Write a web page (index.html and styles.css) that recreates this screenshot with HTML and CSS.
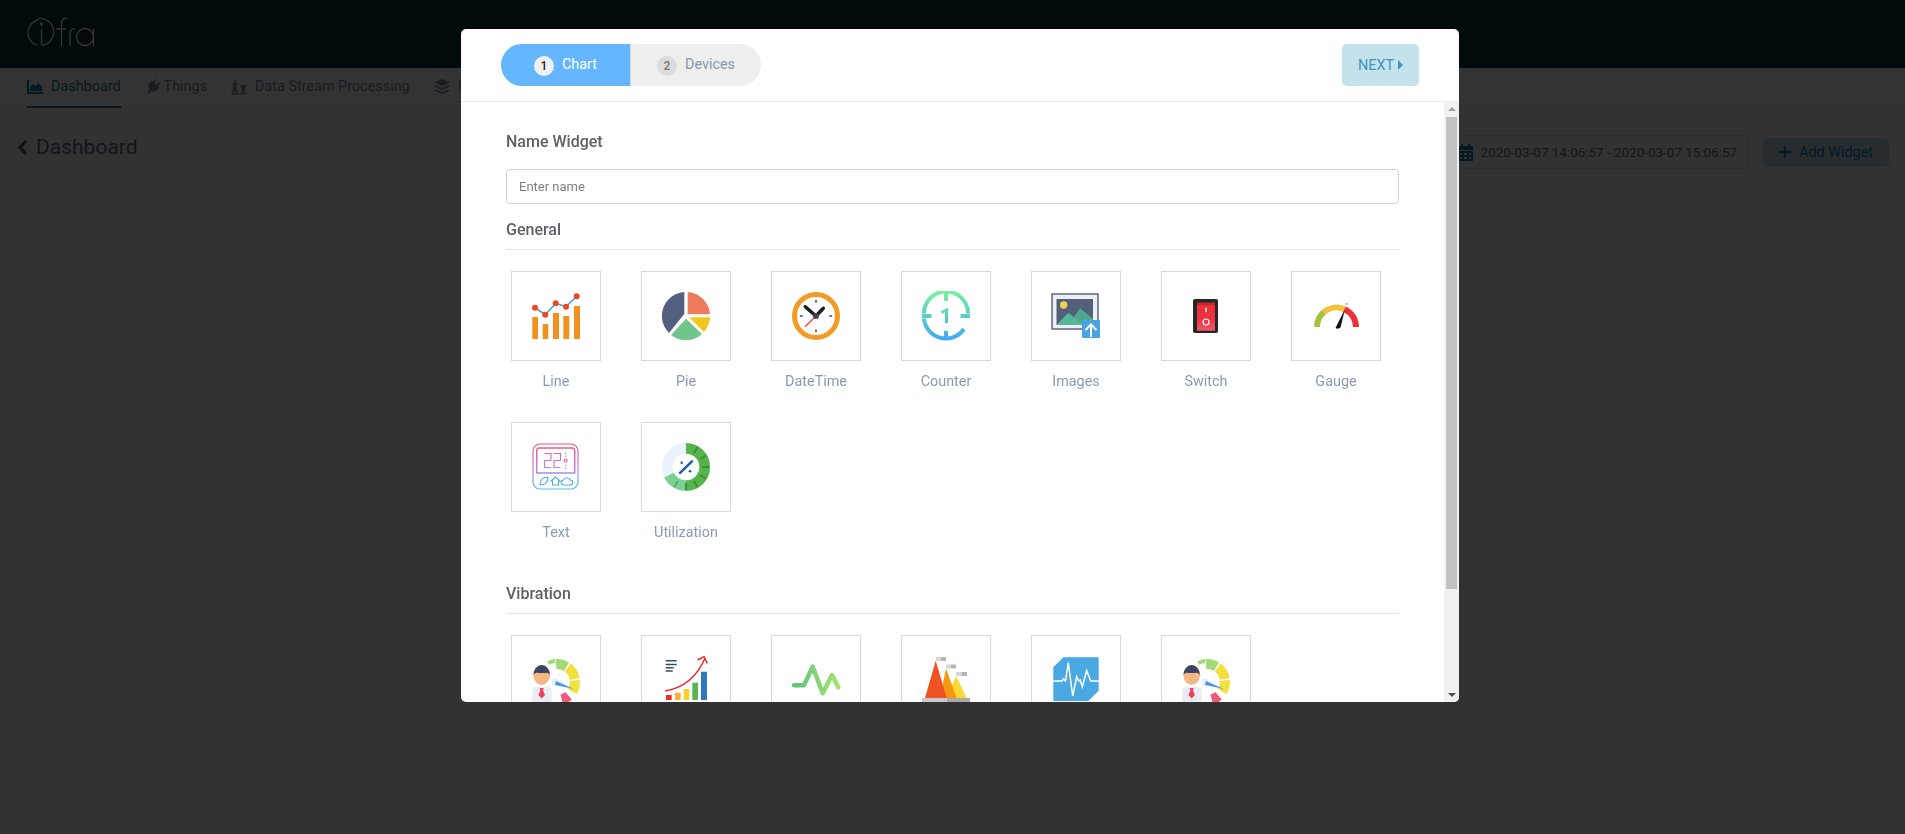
FILE: index.html
```html
<!DOCTYPE html>
<html lang="en">
<head>
    <meta charset="UTF-8">
    <meta name="viewport" content="width=device-width, initial-scale=1.0">
    <title>Dashboard</title>
    <link rel="stylesheet" href="styles.css">
</head>
<body>
    <header class="topbar">
        <svg class="logo" width="70" height="34" viewBox="0 0 70 34" fill="none" stroke="#fff" stroke-width="1.3">
            <path d="M12 4.500a13.500 13.500 0 0 0-2 26"/>
            <path d="M11 3.500a13.500 13.500 0 1 1 4 27"/>
            <path d="M14.500 14v16"/>
            <circle cx="14.500" cy="9" r="1.100"/>
            <path d="M34.500 31V8a4.500 4.500 0 0 1 6-4.500M29 14h10M43 31V18a4 4 0 0 1 5-4"/>
            <circle cx="58" cy="22" r="8.500"/>
            <path d="M66.500 14v17"/>
        </svg>
    </header>

    <nav class="tabs">
        <a class="tab active">
            <svg width="16" height="14" viewBox="0 0 16 14"><path d="M0 0h2v12h14v2H0zM3 11V8l3-4 3 2 2-3 4 4v4z"/></svg>
            Dashboard
        </a>
        <a class="tab plug">
            <svg width="16" height="16" viewBox="0 0 15 15"><path transform="rotate(40 7.500 7.500)" d="M4.500 0H6v4H4.500zM9 0h1.500v4H9zM2.500 4h10v2c0 3-2 5-4 5.500V15h-2v-3.500c-2-.5-4-2.500-4-5.500z"/></svg>
            Things
        </a>
        <a class="tab">
            <svg width="16" height="16" viewBox="0 0 17 16"><path d="M4 0h1v1h1v1H5v2h2v1H5.500l.5 6h1v2H1v-2h1l.5-6H1V4h2.500V2h-1V1H4zM0 14h8v2H0zM10 6h6v2.500h-1L14.500 12h.5v1h-4v-1h.5L11 8.500h-1zM9.500 14h7v2h-7z"/></svg>
            Data Stream Processing
        </a>
        <a class="tab">
            <svg width="16" height="16" viewBox="0 0 16 16"><path d="M8 0l8 3.500L8 7 0 3.500zM2 6.500L8 9l6-2.500 2 1L8 11 0 7.500zM2 10.500L8 13l6-2.500 2 1L8 15 0 11.500z"/></svg>
            Rules
        </a>
    </nav>

    <main class="page-head">
        <h1 class="page-title">
            <svg width="11" height="17" viewBox="0 0 11 17" fill="none" stroke-width="3"><path d="M9 2L3 8.500l6 6.500"/></svg>
            Dashboard
        </h1>
        <div class="page-actions">
            <div class="range">
                <svg width="15" height="17" viewBox="0 0 15 17"><path d="M3 0h2v2h5V0h2v2h3v4H0V2h3zM0 7h15v10H0zM2 9v2h2V9zm4 0v2h3V9zm5 0v2h2V9zM2 13v2h2v-2zm4 0v2h3v-2zm5 0v2h2v-2z"/></svg>
                2020-03-07 14:06:57 - 2020-03-07 15:06:57
            </div>
            <button class="add-btn">
                <svg width="12" height="12" viewBox="0 0 12 12"><path d="M4.800 0h2.400v4.800H12v2.400H7.200V12H4.800V7.200H0V4.800h4.800z"/></svg>
                Add Widget
            </button>
        </div>
    </main>

    <div class="overlay"></div>

    <section class="modal">
        <div class="modal-head">
            <div class="steps">
                <div class="step current"><span class="num">1</span>Chart</div>
                <div class="step"><span class="num">2</span>Devices</div>
            </div>
            <button class="next-btn">NEXT<svg width="5" height="10" viewBox="0 0 5 10"><path d="M0 0l5 5-5 5z"/></svg></button>
        </div>
        <div class="modal-body">
            <div class="modal-content">
                <h3 class="name-title">Name Widget</h3>
                <input class="name-input" placeholder="Enter name">

                <h3 class="group-title">General</h3>
                <div class="grid">
                    <div class="item">
                        <div class="box">
                            <svg width="50" height="50" viewBox="0 0 50 50">
                                <path fill="#f4901e" d="M1.300 26H7v22H1.300zM11.700 33h5.600v15h-5.600zM22 22h6v26h-6zM32.300 25h6v23h-6zM43 15h6v33h-6z"/>
                                <path fill="none" stroke="#3ba0c9" stroke-width="1.500" d="M4 16.700l10.300 7 10.400-11.400L35 15.700l10.700-10.400"/>
                                <g fill="#ee4723"><circle cx="4" cy="16.700" r="3"/><circle cx="14.300" cy="23.700" r="3"/><circle cx="24.700" cy="12.300" r="3"/><circle cx="35" cy="15.700" r="3"/><circle cx="45.700" cy="5.300" r="3"/></g>
                            </svg>
                        </div>
                        <span>Line</span>
                    </div>
                    <div class="item">
                        <div class="box">
                            <svg width="50" height="50" viewBox="0 0 50 50">
                                <path fill="#54607f" d="M23.300 1v22L8 42A24 24 0 0 1 23.300 1z"/>
                                <path fill="#ef7b5d" d="M26.700 1A24 24 0 0 1 49 23.300H26.700z"/>
                                <path fill="#f2c71c" d="M28 26.300h21A24 24 0 0 1 43 41z"/>
                                <path fill="#70c58a" d="M25 27.700L41 43a24 24 0 0 1-31 1z"/>
                            </svg>
                        </div>
                        <span>Pie</span>
                    </div>
                    <div class="item">
                        <div class="box">
                            <svg width="50" height="50" viewBox="0 0 50 50">
                                <circle cx="25" cy="25" r="21.500" fill="#fff" stroke="#f29c26" stroke-width="5"/>
                                <path stroke="#707070" stroke-width="2" d="M25 9v2.500M25 38.500V41M9 25h2.500M38.500 25H41"/>
                                <path stroke="#ef3c4c" stroke-width="1.300" d="M25 25L14 35.700"/>
                                <path fill="none" stroke="#1c1c1c" stroke-width="3.500" stroke-linecap="round" d="M14.300 15.700L25 25l7.300-7.700"/>
                                <circle cx="25" cy="25" r="3" fill="#444"/>
                            </svg>
                        </div>
                        <span>DateTime</span>
                    </div>
                    <div class="item">
                        <div class="box">
                            <svg width="50" height="50" viewBox="0 0 50 50">
                                <defs>
                                    <linearGradient id="gc" gradientUnits="userSpaceOnUse" x1="0" y1="1" x2="0" y2="49"><stop offset="0" stop-color="#78f09c"/><stop offset="1" stop-color="#3fa9f5"/></linearGradient>
                                </defs>
                                <g fill="none" stroke="url(#gc)" stroke-width="4">
                                    <path d="M3 22.500A22 22 0 0 1 47 22.500"/>
                                    <path d="M3 27.500A22 22 0 0 0 43 38"/>
                                    <path d="M25 1v9M25 40v9M1 25h9.500M39.500 25H49"/>
                                    <path stroke-width="3" d="M20.500 21.500l5-2.500v13"/>
                                </g>
                            </svg>
                        </div>
                        <span>Counter</span>
                    </div>
                    <div class="item">
                        <div class="box">
                            <svg width="50" height="50" viewBox="0 0 50 50">
                                <rect x="1" y="3" width="46" height="35" fill="#edeff2" stroke="#5a6680" stroke-width="1.500"/>
                                <rect x="5.500" y="8" width="36.500" height="26" fill="#54607a"/>
                                <circle cx="12.700" cy="14" r="3.700" fill="#f2cf55"/>
                                <path fill="#4ea890" d="M22 27l7.300-9.700L42 28v6H30z"/>
                                <path fill="#54b899" d="M5.500 34L17.300 21.700 32 34z"/>
                                <rect x="31" y="29" width="18" height="18" fill="#4aa3df"/>
                                <path fill="none" stroke="#fff" stroke-width="2" d="M40 46V34M34.500 39l5.500-5.500 5.500 5.500"/>
                            </svg>
                        </div>
                        <span>Images</span>
                    </div>
                    <div class="item">
                        <div class="box">
                            <svg width="50" height="50" viewBox="0 0 50 50">
                                <defs>
                                    <linearGradient id="gs" x1="0" y1="0" x2="0" y2="1"><stop offset="0" stop-color="#ec2f3a"/><stop offset=".6" stop-color="#ec3340"/><stop offset="1" stop-color="#f0596a"/></linearGradient>
                                </defs>
                                <rect x="12" y="8" width="25" height="34" rx="2" fill="#262626"/>
                                <rect x="16" y="11.700" width="18" height="28" fill="url(#gs)"/>
                                <rect x="16" y="11.700" width="18" height="2.500" fill="#c9252f"/>
                                <path stroke="#fff" stroke-width="1.300" d="M25 16.700v4.500"/>
                                <circle cx="25" cy="31" r="3" fill="none" stroke="#fff" stroke-width="1.200"/>
                            </svg>
                        </div>
                        <span>Switch</span>
                    </div>
                    <div class="item">
                        <div class="box">
                            <svg width="50" height="50" viewBox="0 0 50 50">
                                <path fill="none" stroke="#a4c23c" stroke-width="6" d="M6 36A19.500 19.500 0 0 1 13 21"/>
                                <path fill="none" stroke="#f2c13d" stroke-width="6" d="M13 21A19.500 19.500 0 0 1 33.500 18.200"/>
                                <path fill="none" stroke="#ec3237" stroke-width="6" d="M33.500 18.200A19.500 19.500 0 0 1 45 36"/>
                                <path fill="#111" d="M34 18L29.500 36.500q-2.500 2-5 .5z"/>
                                <path stroke="#999" stroke-width="1" d="M34 13h3"/>
                            </svg>
                        </div>
                        <span>Gauge</span>
                    </div>
                    <div class="item">
                        <div class="box">
                            <svg width="50" height="50" viewBox="0 0 50 50">
                                <defs>
                                    <linearGradient id="gt" gradientUnits="userSpaceOnUse" x1="0" y1="2" x2="0" y2="47"><stop offset="0" stop-color="#f0547a"/><stop offset=".5" stop-color="#c47ae0"/><stop offset="1" stop-color="#4fc0f5"/></linearGradient>
                                </defs>
                                <g fill="none" stroke="url(#gt)" stroke-width="1.200">
                                    <rect x="2" y="2" width="45" height="45" rx="7"/>
                                    <path d="M5.700 8.500a2.500 2.500 0 0 1 2.500-2.500h33a2.500 2.500 0 0 1 2.500 2.500V31H5.700z" stroke-width="1.500"/>
                                    <path stroke-width="1.100" d="M13.500 11.500h6.500v7h-6.500v7H20M23 11.500h6.500v7H23v7h6.500"/>
                                    <circle cx="34.700" cy="18.700" r="1.500"/>
                                    <path stroke-width="1" d="M34.700 10.500v1.500M34.700 13.500V15M34.700 22.500V24M34.700 25.500V27"/>
                                </g>
                                <g fill="none" stroke="#52a9ea" stroke-width="1.100">
                                    <path d="M9 43c0-5 3-8 8-8 0 5-3 8-8 8z"/>
                                    <path d="M20 39l4.500-4 4.500 4h-1.500v4h-6v-4z"/>
                                    <path d="M33 43a2.500 2.500 0 0 1-.5-5 3.500 3.500 0 0 1 6.500 0 2.500 2.500 0 0 1 .5 5z"/>
                                </g>
                            </svg>
                        </div>
                        <span>Text</span>
                    </div>
                    <div class="item">
                        <div class="box">
                            <svg width="50" height="50" viewBox="0 0 50 50">
                                <circle cx="25" cy="25" r="18.700" fill="none" stroke="#eaf3fb" stroke-width="10.700"/>
                                <path fill="none" stroke="#55b44c" stroke-width="10.700" d="M25 6.300a18.700 18.700 0 0 1 0 37.400"/>
                                <path fill="none" stroke="#7bd093" stroke-width="10.700" d="M25 43.700A18.700 18.700 0 0 1 8.100 33.100"/>
                                <path stroke="#3f8f3c" stroke-width="2" d="M33 11.100l3.500-6M38.900 17l6-3.500M41 25h7M38.900 33l6 3.500M33 38.900l3.500 6M25 41v7"/>
                                <path stroke="#58ad68" stroke-width="2" d="M17 38.900l-3.500 6"/>
                                <path stroke="#1f5da5" stroke-width="2.500" d="M18.300 31.700L31.700 18.700"/>
                                <circle cx="20.700" cy="20.700" r="1.300" fill="#1f5da5"/>
                                <circle cx="29" cy="29.300" r="1.300" fill="#1f5da5"/>
                            </svg>
                        </div>
                        <span>Utilization</span>
                    </div>
                </div>

                <h3 class="group-title vibration">Vibration</h3>
                <div class="grid">
                    <div class="item">
                        <div class="box">
                            <svg width="50" height="50" viewBox="0 0 50 50">
                                <g id="man">
                                    <g fill="none">
                                        <path stroke="#a3d977" stroke-width="4" d="M17.100 8A21 21 0 0 1 24.200 6.100"/>
                                        <path stroke="#a3d977" stroke-width="10" d="M25.100 9A18 18 0 0 1 35.500 11.700"/>
                                        <path stroke="#f4e03a" stroke-width="10" d="M36.800 12.600A18 18 0 0 1 43.700 23.900"/>
                                        <path stroke="#f4e03a" stroke-width="10" d="M43.900 25.400A18 18 0 0 1 41.300 36.500"/>
                                        <path stroke="#ef5a78" stroke-width="10" d="M37.600 40.800A18 18 0 0 1 30.700 44.400"/>
                                    </g>
                                    <circle cx="24" cy="27" r="3.500" fill="#e8eef7"/>
                                    <path fill="#3f9be8" d="M25 26l18 8-19-4z"/>
                                    <ellipse cx="10.700" cy="20" rx="8.300" ry="10" fill="#f4b783"/>
                                    <path fill="#3c4466" d="M2.400 20a8.300 10 0 0 1 16.600 0c-1-1.500-2-2-3-2.300-3 .3-8 .3-10.500 0-1 .3-2.100.8-3.100 2.300z"/>
                                    <path fill="#e9ecf3" d="M1.300 50V36c0-3 2-4.300 5-4.300h9.200c3 0 5.200 1.300 5.200 4.300v14z"/>
                                    <path fill="#e8435f" d="M8.700 33h4l-.6 2.500 1.900 4.500-3.300 3.500L7.400 40l1.900-4.500z"/>
                                </g>
                            </svg>
                        </div>
                    </div>
                    <div class="item">
                        <div class="box">
                            <svg width="50" height="50" viewBox="0 0 50 50">
                                <path stroke="#33505f" stroke-width="1.500" d="M4.700 5.700h11M4.700 9.500h11M4.700 12.700h8M4.700 16h7"/>
                                <path fill="none" stroke="#e8262c" stroke-width="1.500" d="M4 36C22 33 36 22 44 3.300"/>
                                <path fill="none" stroke="#e8262c" stroke-width="1.500" d="M36.700 5l6.300-3.300 3.300 6.600"/>
                                <path fill="#ee2e24" d="M5 40h5.700v5H5z"/>
                                <path fill="#f8b13e" d="M14 37.700h5.700V45H14z"/>
                                <path fill="#fcd028" d="M22.700 34h5.600v11h-5.600z"/>
                                <path fill="#5bb552" d="M31.300 27.700H37V45h-5.700z"/>
                                <path fill="#2d79bf" d="M40 16.700h6V45h-6z"/>
                            </svg>
                        </div>
                    </div>
                    <div class="item">
                        <div class="box">
                            <svg width="50" height="50" viewBox="0 0 50 50">
                                <defs>
                                    <linearGradient id="gw" gradientUnits="userSpaceOnUse" x1="3" y1="0" x2="47" y2="0"><stop offset="0" stop-color="#5fc47e"/><stop offset="1" stop-color="#a4e26d"/></linearGradient>
                                </defs>
                                <path fill="none" stroke="url(#gw)" stroke-width="4.500" stroke-linecap="round" stroke-linejoin="round" d="M3 30.300h10l8.700-18.600 10 26.600L41 20l6.300 12.300"/>
                            </svg>
                        </div>
                    </div>
                    <div class="item">
                        <div class="box">
                            <svg width="50" height="50" viewBox="0 0 50 50">
                                <path fill="#d8d8d8" d="M15 2h5v4h-5zM25 9.500h5v4h-5zM35 17h5.500v4H35z"/>
                                <path fill="#b5b5b5" d="M20 2h5v4h-5zM30 9.500h5v4h-5zM40.500 17h5.500v4h-5.500z"/>
                                <path fill="#fdd835" d="M35 21l10.700 22h-20z"/>
                                <path fill="#f59a10" d="M25 13.300L35.700 43H19z"/>
                                <path fill="#ef5323" d="M14.700 5.700L25.700 43H4z"/>
                                <path fill="#c9c9c9" d="M1 43h24.700v7H1z"/>
                                <path fill="#aaa" d="M25.700 43H49v7H25.700z"/>
                            </svg>
                        </div>
                    </div>
                    <div class="item">
                        <div class="box">
                            <svg width="50" height="50" viewBox="0 0 50 50">
                                <path fill="#4aa8e3" d="M12.300 2.300h35.400v33.400L37.300 46h-35V12.300z"/>
                                <path fill="none" stroke="#fff" stroke-width="1.500" d="M2.300 26H11l1.500-2 2 2 2.800-18.300L21.700 41l4-19.300 2 4.300 1.500-1 2.100 6.700 4.400-16 4 10.300h8"/>
                            </svg>
                        </div>
                    </div>
                    <div class="item">
                        <div class="box">
                            <svg width="50" height="50" viewBox="0 0 50 50"><use href="#man"/></svg>
                        </div>
                    </div>
                </div>
            </div>
            <div class="scrollbar">
                <span class="arrow up"></span>
                <div class="thumb"></div>
                <span class="arrow down"></span>
            </div>
        </div>
    </section>
</body>
</html>
```

FILE: styles.css
```css
* {
    box-sizing: border-box;
}
html, body {
    height: 100%;
}
body {
    margin: 0;
    overflow: hidden;
    font-family: Roboto, sans-serif;
    background-color: #f8f8f8;
    color: #32325d;
}
.topbar {
    height: 68px;
    background-color: #0a3241;
    padding: 15px 0 0 27px;
}
.logo {
    display: block;
}
.tabs {
    display: flex;
    height: 40px;
    gap: 24px;
    padding-left: 27px;
    background-color: #fff;
    border-bottom: 1px solid #ececec;
}
.tab {
    display: flex;
    align-items: center;
    gap: 8px;
    height: 40px;
    padding-bottom: 3px;
    font-size: 14.4px;
    color: #7f8fa3;
    fill: #7f8fa3;
}
.tab.plug svg {
    margin-right: -5px;
}
.tab.active {
    color: #1d7fb0;
    fill: #1d7fb0;
    border-bottom: 2px solid #1d7fb0;
    padding-bottom: 1px;
}
.page-head {
    display: flex;
    justify-content: space-between;
    align-items: center;
    padding: 27px 16px 0 17px;
}
.page-title {
    display: flex;
    align-items: center;
    gap: 8px;
    margin: 0 0 10px 0;
    font-size: 21px;
    font-weight: 400;
    color: #5e6e82;
    stroke: #4a5666;
}
.page-actions {
    display: flex;
    align-items: center;
    gap: 15px;
}
.range {
    display: flex;
    align-items: center;
    gap: 8px;
    height: 34px;
    padding: 0 10px 0 0;
    font-size: 13.44px;
    color: #707070;
    fill: #1d7fb0;
    border: 1px solid #ddd;
    border-radius: 4px;
}
.add-btn {
    display: flex;
    align-items: center;
    justify-content: center;
    gap: 8px;
    height: 29px;
    width: 126px;
    border: 0;
    border-radius: 5px;
    background-color: #c2dfe9;
    color: #1d7fb0;
    fill: #1d7fb0;
    font-family: Roboto, sans-serif;
    font-size: 14.4px;
}
.overlay {
    position: fixed;
    inset: 0;
    background-color: rgba(0, 0, 0, 0.8);
}
.modal {
    position: fixed;
    left: 461px;
    top: 29px;
    width: 998px;
    height: 673px;
    display: flex;
    flex-direction: column;
    overflow: hidden;
    background-color: #fff;
    border-radius: 5px;
}
.modal-head {
    display: flex;
    justify-content: space-between;
    align-items: flex-start;
    height: 73px;
    flex-shrink: 0;
    padding: 15px 40px 0 40px;
    border-bottom: 1px solid #ebebeb;
}
.steps {
    display: flex;
    width: 260px;
    height: 42px;
    border-radius: 21px;
    overflow: hidden;
    background-color: #eeeeee;
}
.step {
    display: flex;
    align-items: center;
    justify-content: center;
    gap: 8px;
    width: 130px;
    padding-bottom: 2px;
    font-size: 14.4px;
    color: #8898aa;
}
.step.current {
    background-color: #63b6ff;
    border-right: 1px solid #d8d8d8;
    color: #fff;
}
.num {
    display: flex;
    align-items: center;
    justify-content: center;
    width: 20px;
    height: 20px;
    margin-top: 4px;
    border-radius: 50%;
    font-size: 12px;
    font-weight: 500;
    background-color: #dcdcdc;
    color: #777;
}
.current .num {
    background-color: #f1f1f1;
    color: #222;
}
.next-btn {
    display: flex;
    align-items: center;
    justify-content: center;
    gap: 4px;
    width: 77px;
    height: 42px;
    border: 0;
    border-radius: 5px;
    background-color: #c4e2ec;
    color: #3f94c0;
    fill: #3f94c0;
    font-family: Roboto, sans-serif;
    font-size: 14.4px;
}
.modal-body {
    display: flex;
    flex: 1;
    min-height: 0;
}
.modal-content {
    flex: 1;
    min-width: 0;
    padding: 31px 45px 0 45px;
    overflow: hidden;
}
.name-title, .group-title {
    margin: 0;
    font-size: 16px;
    font-weight: 500;
    line-height: 18px;
    color: #5f5f66;
}
.name-input {
    display: block;
    width: 100%;
    height: 35px;
    margin-top: 18px;
    padding: 0 12px;
    border: 1px solid #ccd2dc;
    border-radius: 4px;
    font-family: Roboto, sans-serif;
    font-size: 13px;
}
.name-input::placeholder {
    color: #7b7f86;
}
.group-title {
    height: 30px;
    margin-top: 16px;
    padding-top: 1px;
    border-bottom: 1px solid #e3e3e3;
}
.group-title.vibration {
    margin-top: 11px;
}
.grid {
    display: flex;
    flex-wrap: wrap;
    column-gap: 40px;
    margin-top: 21px;
    padding-left: 5px;
}
.item {
    width: 90px;
    height: 151px;
    text-align: center;
    font-size: 14.4px;
    color: #8a9ab5;
}
.box {
    display: flex;
    align-items: center;
    justify-content: center;
    width: 90px;
    height: 90px;
    margin-bottom: 12px;
    border: 1px solid #d9d9d9;
}
.scrollbar {
    display: flex;
    flex-direction: column;
    align-items: center;
    width: 15px;
    background-color: #f1f1f1;
}
.arrow {
    width: 0;
    height: 0;
    border-left: 4px solid transparent;
    border-right: 4px solid transparent;
}
.arrow.up {
    margin-top: 5px;
    border-bottom: 4px solid #a3a3a3;
}
.arrow.down {
    margin-top: auto;
    margin-bottom: 5px;
    border-top: 4px solid #505050;
}
.thumb {
    width: 11px;
    height: 472px;
    margin-top: 6px;
    background-color: #c1c1c1;
}
```
